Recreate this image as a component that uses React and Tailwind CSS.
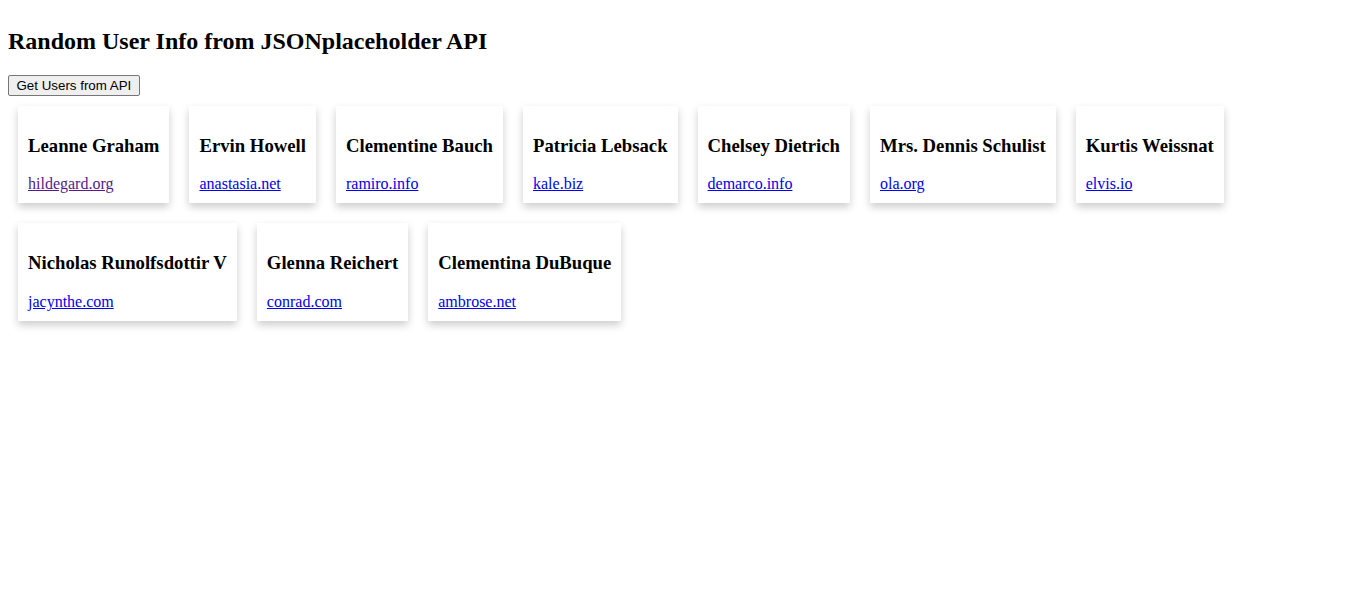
import React from 'react';

const users = [
  { name: 'Leanne Graham', site: 'hildegard.org', visited: true },
  { name: 'Ervin Howell', site: 'anastasia.net' },
  { name: 'Clementine Bauch', site: 'ramiro.info' },
  { name: 'Patricia Lebsack', site: 'kale.biz' },
  { name: 'Chelsey Dietrich', site: 'demarco.info' },
  { name: 'Mrs. Dennis Schulist', site: 'ola.org' },
  { name: 'Kurtis Weissnat', site: 'elvis.io' },
  { name: 'Nicholas Runolfsdottir V', site: 'jacynthe.com' },
  { name: 'Glenna Reichert', site: 'conrad.com' },
  { name: 'Clementina DuBuque', site: 'ambrose.net' },
];

const UserCard = ({ user }) => (
  <div className="m-[10px] p-[10px] bg-white shadow-[0_4px_8px_0_rgba(0,0,0,0.2)]">
    <h3 className="my-[18.72px] text-[18.72px] font-bold leading-[normal]">{user.name}</h3>
    <a
      href="#"
      className={`underline ${user.visited ? 'text-[#551a8b]' : 'text-[#0000ee]'}`}
    >
      {user.site}
    </a>
  </div>
);

export default function App() {
  return (
    <div className="min-h-screen bg-white p-2 font-['Liberation_Serif',serif] text-base leading-[normal] text-black">
      <h2 className="my-[19.92px] text-[24px] font-bold leading-[normal]">
        Random User Info from JSONplaceholder API
      </h2>
      <button className="px-[7.5px] py-[2px] border border-[#767676] rounded-[2px] bg-[#efefef] font-['Liberation_Sans',Arial,sans-serif] text-[13.333px] leading-[normal] text-black">
        Get Users from API
      </button>
      <div className="flex flex-wrap">
        {users.map((u) => (
          <UserCard key={u.name} user={u} />
        ))}
      </div>
    </div>
  );
}
